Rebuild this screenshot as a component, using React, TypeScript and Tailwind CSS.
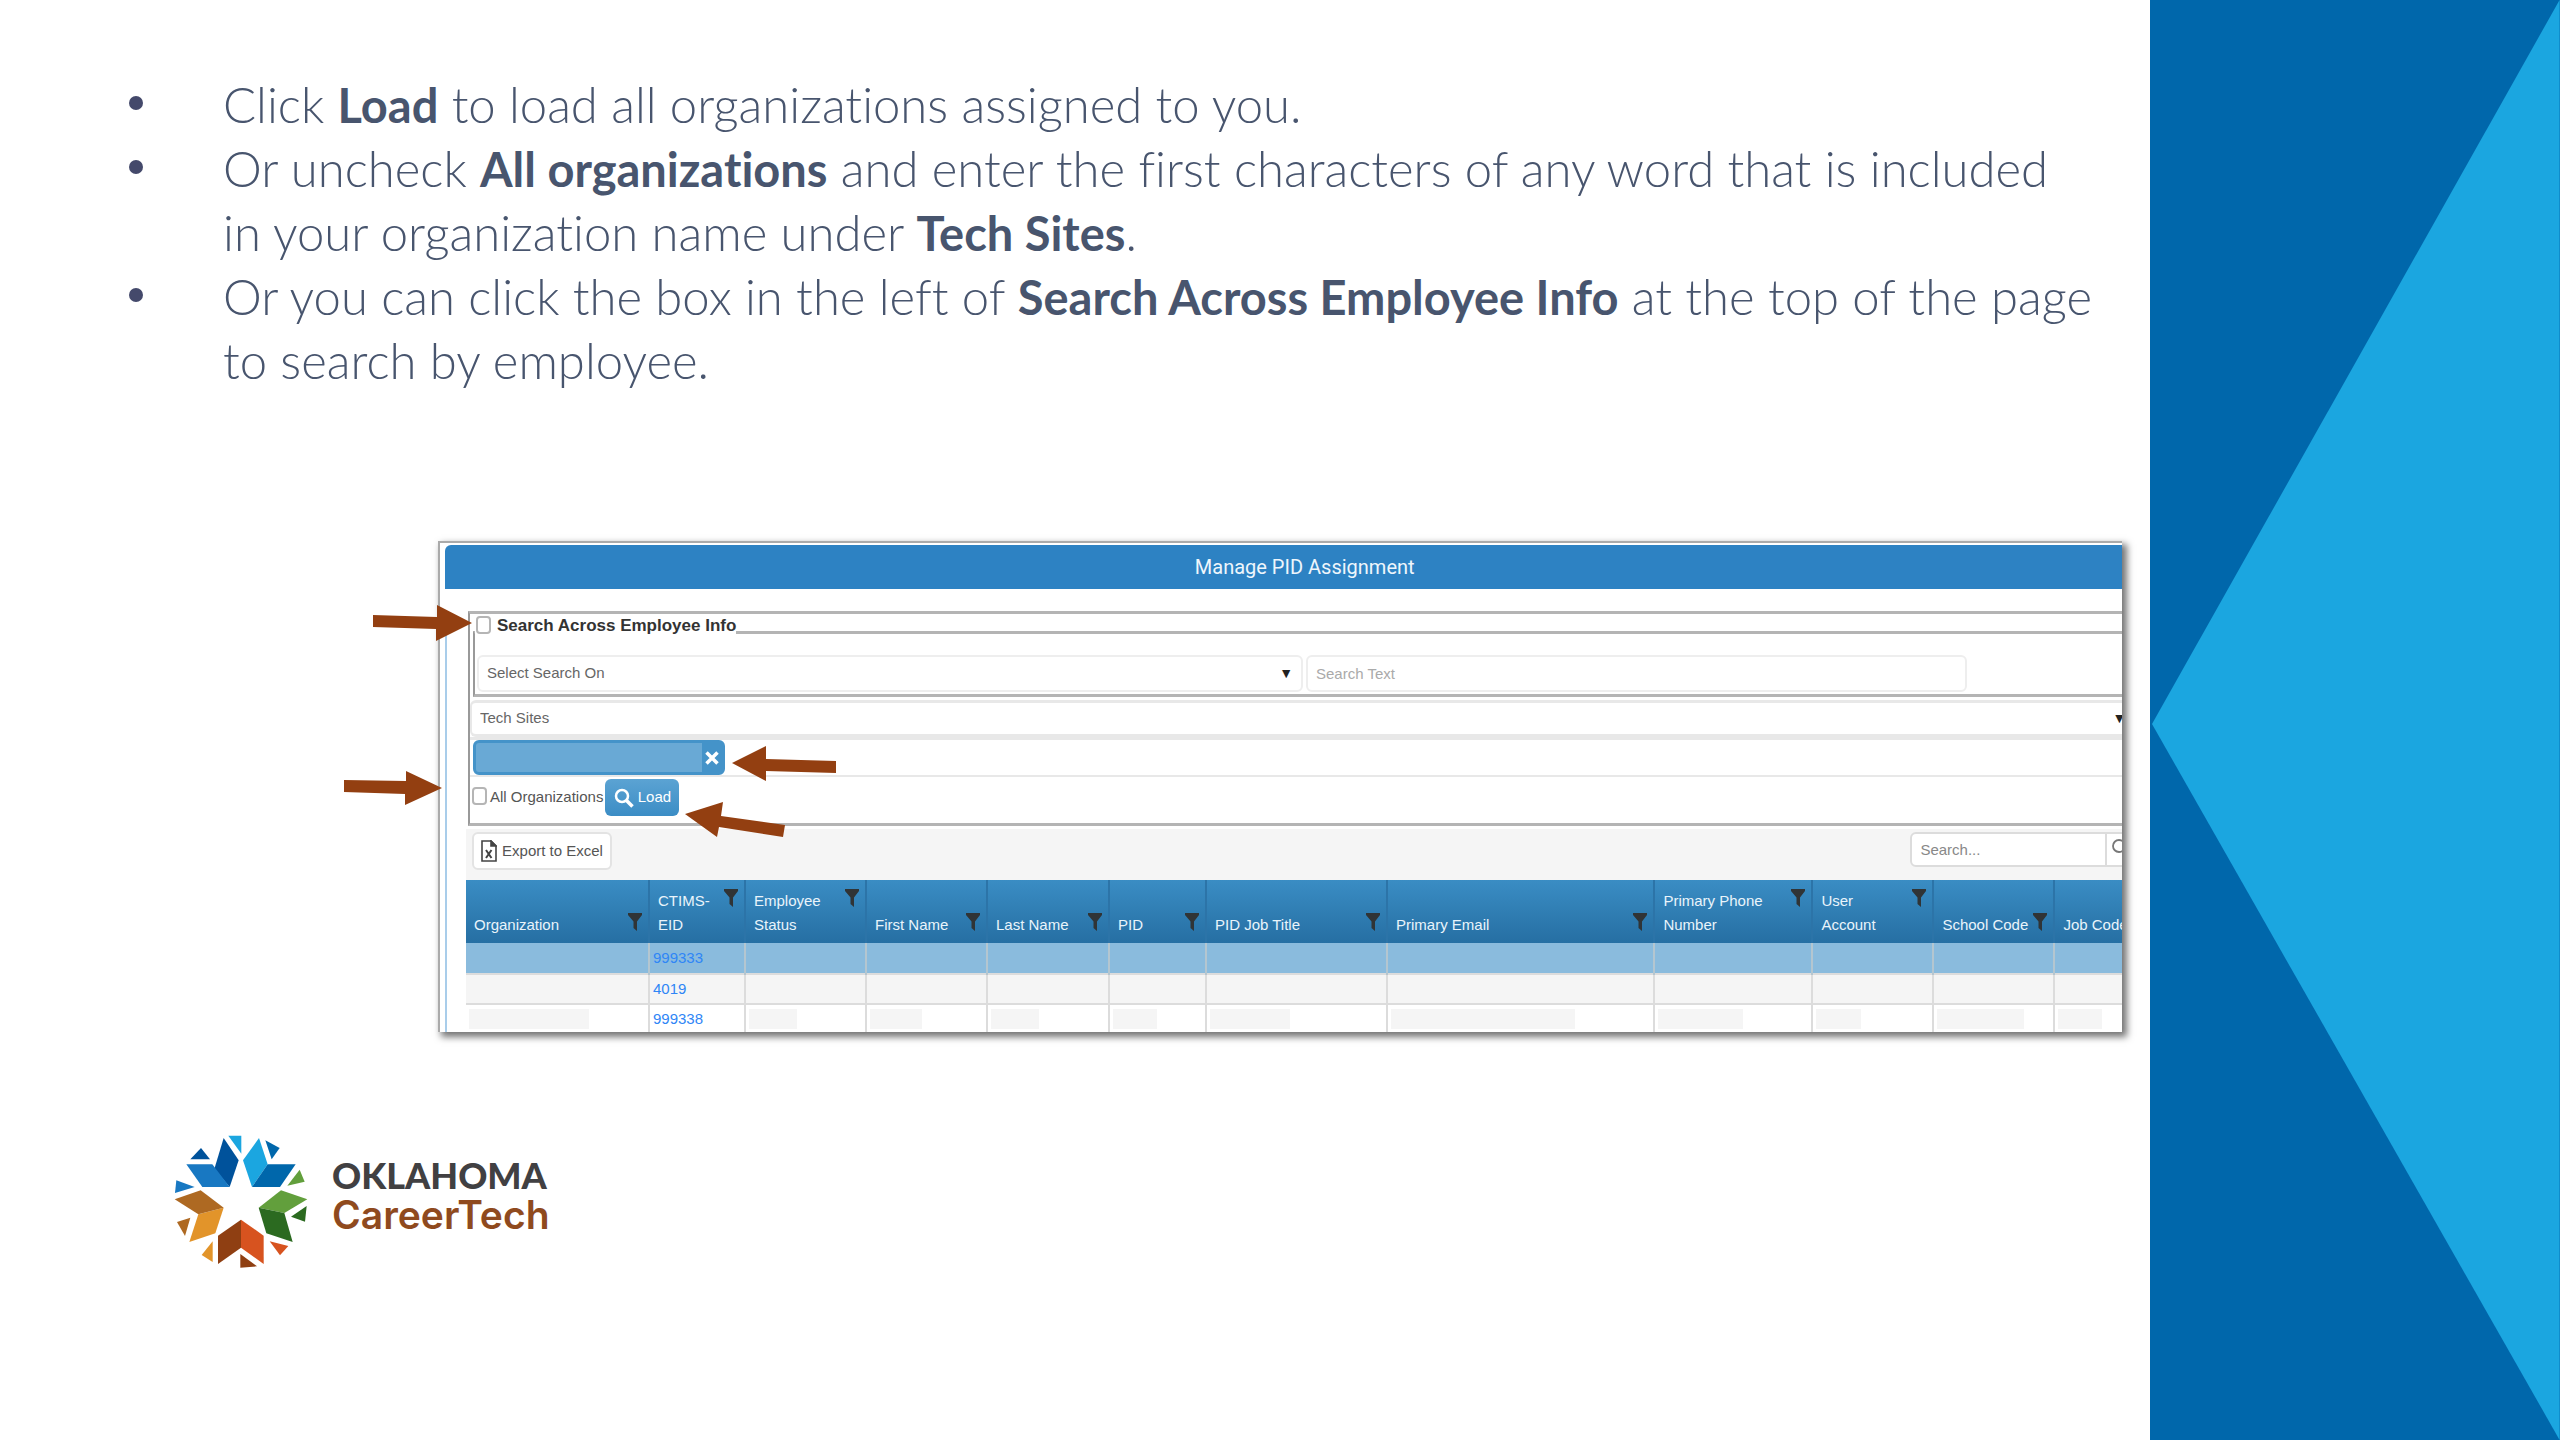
import type { ReactNode } from "react";

interface Column {
  key: string;
  lines: string[];
  width: string;
  // width of the masked value in the last row
  mask: string;
  filter?: boolean;
}

const columns: Column[] = [
  { key: "organization", lines: ["Organization"], width: "w-[183px]", mask: "w-[120px]", filter: true },
  { key: "eid", lines: ["CTIMS-", "EID"], width: "w-[96px]", mask: "", filter: true },
  { key: "status", lines: ["Employee", "Status"], width: "w-[121px]", mask: "w-[48px]", filter: true },
  { key: "first", lines: ["First Name"], width: "w-[121px]", mask: "w-[52px]", filter: true },
  { key: "last", lines: ["Last Name"], width: "w-[122px]", mask: "w-[48px]", filter: true },
  { key: "pid", lines: ["PID"], width: "w-[97px]", mask: "w-[44px]", filter: true },
  { key: "title", lines: ["PID Job Title"], width: "w-[181px]", mask: "w-[80px]", filter: true },
  { key: "email", lines: ["Primary Email"], width: "", mask: "w-[184px]", filter: true },
  { key: "phone", lines: ["Primary Phone", "Number"], width: "w-[158px]", mask: "w-[85px]", filter: true },
  { key: "account", lines: ["User", "Account"], width: "w-[121px]", mask: "w-[45px]", filter: true },
  { key: "school", lines: ["School Code"], width: "w-[121px]", mask: "w-[87px]", filter: true },
  { key: "job", lines: ["Job Code"], width: "w-[68px]", mask: "w-[44px]" },
];

const rows = [
  { eid: "999333", className: "h-[31px] bg-[#8abbdd]", cell: "border-[#b4c6d0]", masked: false },
  { eid: "4019", className: "h-[30px] bg-[#f5f5f5]", cell: "border-[#dcdcdc]", masked: false },
  { eid: "999338", className: "h-[28px] bg-white", cell: "border-[#dcdcdc]", masked: true },
];

function Bullet({ children }: { children: ReactNode }) {
  return (
    <li className="flex">
      <span className="mt-6 mr-20 h-[14px] w-[14px] shrink-0 rounded-full bg-[#44496b]" />
      <span>{children}</span>
    </li>
  );
}

function Strong({ children }: { children: ReactNode }) {
  return <b className="text-[47px] leading-none font-bold">{children}</b>;
}

function FilterIcon() {
  return (
    <svg className="h-[18px] w-[14px] shrink-0" viewBox="0 0 14 18" fill="#303436">
      <path d="M0 0h14v2L9 8.500v9.500L5.500 15V8.500L0 2z" />
    </svg>
  );
}

function SearchIcon({ className, thin }: { className: string; thin?: boolean }) {
  return (
    <svg className={className} viewBox="0 0 20 20" fill="none" stroke="currentColor">
      <circle cx="8" cy="8" r="6" strokeWidth={thin ? 1.8 : 2.5} />
      <path d="M12.500 12.500L18.500 18.500" strokeWidth={thin ? 2.4 : 3.5} />
    </svg>
  );
}

function ExcelIcon() {
  return (
    <svg className="h-[22px] w-[16px]" viewBox="0 0 16 22" fill="none" stroke="#444" strokeWidth="1.600">
      <path d="M1 1h9l5 5v15H1z" />
      <path d="M10 1v5h5z" fill="#444" />
      <path d="M5 10l5.500 8M10.500 10L5 18" strokeWidth="2" />
    </svg>
  );
}

function Logo() {
  return (
    <div className="flex items-start gap-[22px]">
      <svg className="h-[137px] w-[137px]" viewBox="70 68 411 411">
        <path fill="#00529b" d="M222 83L267 150L240 230L194 176Z" />
        <path fill="#1878c2" d="M110 162H188L240 230H158Z" />
        <path fill="#1ba6e0" d="M328 83L354 162L307 230L280 150Z" />
        <path fill="#0067ab" d="M354 162H438L391 230H307Z" />
        <path fill="#629f3c" d="M394 240L473 267L404 308L327 292Z" />
        <path fill="#2b6a20" d="M327 292L404 308L429 395L350 369Z" />
        <path fill="#d7531f" d="M274 328L342 376V461L274 412Z" />
        <path fill="#8f3f12" d="M274 328L205 376V461L274 412Z" />
        <path fill="#e2942a" d="M222 292L146 312L119 395L197 369Z" />
        <path fill="#ae6922" d="M153 240L222 292L146 312L75 267Z" />
        <path fill="#1ba6e0" d="M236 76H275V130Z" />
        <path fill="#0067ab" d="M347 90L390 113L366 147Z" />
        <path fill="#00529b" d="M154 113L181 147H122Z" />
        <path fill="#1878c2" d="M80 210L135 230L76 248Z" />
        <path fill="#629f3c" d="M450 178L465 214L413 226Z" />
        <path fill="#2b6a20" d="M471 287L466 334L424 319Z" />
        <path fill="#d7531f" d="M360 393L416 407L391 435Z" />
        <path fill="#8f3f12" d="M272 431L322 468L272 472Z" />
        <path fill="#e2942a" d="M189 393V455L156 434Z" />
        <path fill="#ae6922" d="M122 322L106 377L82 335Z" />
      </svg>
      <div className="pt-[22px]">
        <p className="font-['Lato',sans-serif] text-[36px] leading-10 font-black text-[#414042]">OKLAHOMA</p>
        <p className="font-['Inter',sans-serif] text-[39px] leading-10 font-semibold text-[#8f4a1e]">CareerTech</p>
      </div>
    </div>
  );
}

// Callout arrows drawn on top of the panel
function Arrows() {
  return (
    <svg
      className="pointer-events-none absolute top-0 -left-[100px] h-[300px] w-[500px]"
      viewBox="0 0 500 300"
      fill="#933f11"
    >
      <polygon points="35,74 99,76 99,64 134,82 98,100 98,88 35,86" />
      <polygon points="6,239 68,240 68,230 104,247 67,264 67,253 6,251" />
      <polygon points="394,222 428,205 428,218 498,220 498,232 428,230 428,240" />
      <polygon points="347,273 385,261 383,275 447,284 445,296 381,286 379,296" />
    </svg>
  );
}

function SearchForm() {
  return (
    <div className="mt-[22px] ml-[2px] border-y-[3px] border-l-2 border-y-[#b4b4b4] border-l-[#999] pb-[7px]">
      <fieldset className="ml-[3px] border-y-[3px] border-l-2 border-y-[#b4b4b4] border-l-[#999] pt-[5px] pb-[2px]">
        <legend className="flex h-9 items-start gap-[6px] pt-[2px] pl-px">
          <input
            id="across"
            type="checkbox"
            className="h-[18px] w-[15px] appearance-none rounded-sm border-2 border-[#b5b5b5] bg-white"
          />
          <label htmlFor="across" className="text-[17px] leading-5 font-bold text-[#333]">
            Search Across Employee Info
          </label>
        </legend>
        <div className="flex gap-[3px] pl-[2px]">
          <div className="relative w-[50.2%]">
            <select
              aria-label="Select Search On"
              className="h-[37px] w-full appearance-none rounded-md border-2 border-[#eee] bg-white px-2 text-[#666]"
            >
              <option>Select Search On</option>
            </select>
            <span className="pointer-events-none absolute top-[12px] right-[10px] text-[14px] leading-3 text-[#222]">▼</span>
          </div>
          <input
            type="text"
            aria-label="Search Text"
            placeholder="Search Text"
            className="h-[37px] w-[40.2%] rounded-md border-2 border-[#eee] px-2 placeholder:text-[#aaa]"
          />
        </div>
      </fieldset>
      <div className="relative mt-[3px]">
        <select
          aria-label="Tech Sites"
          className="h-[37px] w-full appearance-none rounded-l-md border-y-3 border-l-2 border-[#e8e8e8] bg-white px-2 text-[#666]"
        >
          <option>Tech Sites</option>
        </select>
        <span className="pointer-events-none absolute top-[12px] -right-1 text-[14px] leading-3 text-[#222]">▼</span>
      </div>
      <div className="flex h-[40px] items-center border-t-3 border-b-2 border-[#e8e8e8] pl-[3px]">
        <div className="flex h-[35px] w-[252px] items-stretch justify-end rounded-md border-3 border-[#4493c9] bg-[#69a9d5]">
          <button type="button" aria-label="Remove" className="flex w-5 items-center justify-center bg-[#4493c9]">
            <svg className="h-[14px] w-[14px]" viewBox="0 0 14 14" stroke="#fff" strokeWidth="3.500">
              <path d="M1.500 1.500l11 11M12.500 1.500l-11 11" />
            </svg>
          </button>
        </div>
      </div>
      <div className="flex items-center pt-[2px] pl-[2px]">
        <input
          id="all"
          type="checkbox"
          className="mb-1 h-[18px] w-[15px] appearance-none rounded-sm border-2 border-[#b5b5b5] bg-white"
        />
        <label htmlFor="all" className="ml-[3px] text-[#555]">
          All Organizations
        </label>
        <button
          type="button"
          className="ml-[2px] flex h-[37px] w-[74px] items-center justify-center gap-1 rounded-md bg-gradient-to-b from-[#5ba3d3] to-[#3b8dc5] text-white"
        >
          <SearchIcon className="h-5 w-5" />
          Load
        </button>
      </div>
    </div>
  );
}

function Grid() {
  return (
    <table className="w-full table-fixed border-collapse">
      <thead>
        <tr className="h-[63px] bg-gradient-to-b from-[#3a8dc4] to-[#266fa3] text-left text-[#e9f4fb]">
          {columns.map((column) => (
            <th
              key={column.key}
              className={`border-r-2 border-[#2c74a8] p-0 pr-[6px] pb-[6px] pl-2 align-bottom font-normal last:border-r-0 ${column.width}`}
            >
              <div className="flex items-start justify-between leading-6 whitespace-nowrap">
                <span>
                  {column.lines.map((line) => (
                    <span key={line} className="block">
                      {line}
                    </span>
                  ))}
                </span>
                {column.filter && <FilterIcon />}
              </div>
            </th>
          ))}
        </tr>
      </thead>
      <tbody>
        {rows.map((row) => (
          <tr key={row.eid} className={`border-b-2 border-[#dcdcdc] last:border-b-0 ${row.className}`}>
            {columns.map((column) => (
              <td key={column.key} className={`border-r-2 p-0 pl-[3px] leading-6 last:border-r-0 ${row.cell}`}>
                {column.key === "eid" && (
                  <a href="#" className="text-[#2f86f6]">
                    {row.eid}
                  </a>
                )}
                {row.masked && column.key !== "eid" && <div className={`h-5 bg-[#f5f5f5] ${column.mask}`} />}
              </td>
            ))}
          </tr>
        ))}
      </tbody>
    </table>
  );
}

function Panel() {
  return (
    <div className="overflow-hidden border-t-2 border-l-2 border-[#aaa] bg-white pt-[2px] pl-[5px] font-['Liberation_Sans',Arial,sans-serif] text-[15px] shadow-[4px_4px_7px_1px_rgba(0,0,0,0.55)]">
      <h1 className="h-[44px] rounded-tl-md bg-[#2d82c3] pl-[42px] text-center font-['Roboto',sans-serif] text-[20px] leading-[44px] text-[#eef6fc]">
        Manage PID Assignment
      </h1>
      <div className="border-l-2 border-[#a9cdea] pl-[19px]">
        <SearchForm />
        <div className="mt-[3px] flex h-[51px] items-start justify-between bg-[#f5f5f5] pt-[3px] pl-[6px]">
          <button
            type="button"
            className="flex h-[38px] w-[140px] items-center justify-center gap-[5px] rounded-md border-2 border-[#e3e3e3] bg-white text-[#555]"
          >
            <ExcelIcon />
            Export to Excel
          </button>
          <div className="flex">
            <input
              type="search"
              aria-label="Search"
              placeholder="Search..."
              className="h-[35px] w-[197px] rounded-l-md border-2 border-[#dcdcdc] bg-white px-2 placeholder:text-[#888]"
            />
            <button
              type="button"
              aria-label="Run search"
              className="flex w-[15px] items-start overflow-hidden border-y-2 border-[#dcdcdc] bg-white pt-1 pl-1 text-[#777]"
            >
              <SearchIcon className="h-5 w-5 shrink-0" thin />
            </button>
          </div>
        </div>
        <Grid />
      </div>
    </div>
  );
}

export default function App() {
  return (
    <div className="flex min-h-screen bg-white">
      <main className="min-w-0 flex-1 pt-[72px] pr-[28px]">
        <ul className="pr-1 pl-[129px] font-['Lato',sans-serif] text-[49px] leading-16 font-light text-[#48556e] [font-variant-ligatures:none]">
          <Bullet>
            Click <Strong>Load</Strong> to load all organizations assigned to you.
          </Bullet>
          <Bullet>
            Or uncheck <Strong>All organizations</Strong> and enter the first characters of any word that is included
            in&nbsp;your organization name under <Strong>Tech Sites</Strong>.
          </Bullet>
          <Bullet>
            Or you can click the box in the left of <Strong>Search Across Employee Info</Strong> at the top of the page
            to&nbsp;search by employee.
          </Bullet>
        </ul>
        <div className="relative mt-[149px] ml-[438px]">
          <Panel />
          <Arrows />
        </div>
        <div className="mt-[101px] ml-[173px]">
          <Logo />
        </div>
      </main>
      <aside className="w-[16%]">
        <svg className="h-full w-full bg-[#0067ab]" viewBox="0 0 410 1440" preserveAspectRatio="none">
          <polygon points="2,724 410,0 410,1440" fill="#1ba6e0" />
        </svg>
      </aside>
    </div>
  );
}
